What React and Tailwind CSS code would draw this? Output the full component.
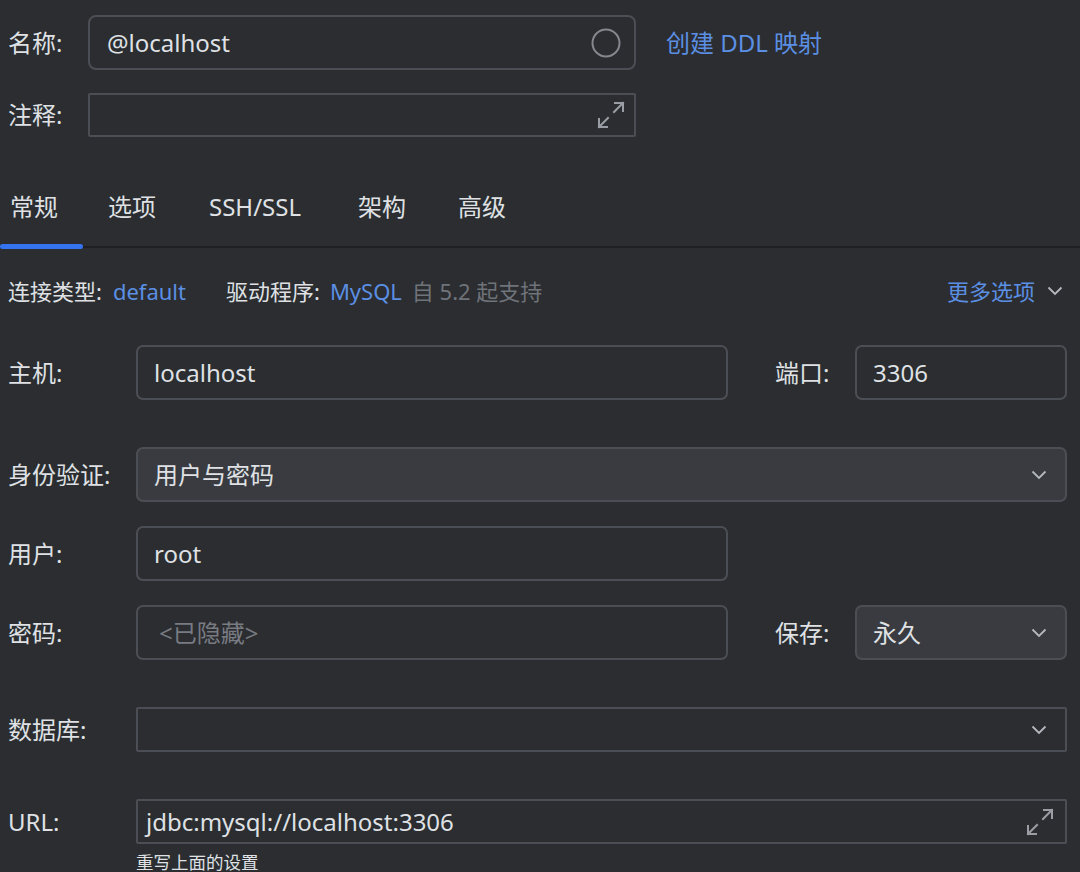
import { useState } from 'react'

const font = { fontFamily: '"Noto Sans", "Noto Sans CJK SC", sans-serif' }

function Chevron({ className = '' }) {
  return (
    <svg width="16" height="10" viewBox="0 0 16 10" className={className}>
      <polyline points="1.5,1.5 8,8 14.5,1.5" fill="none" stroke="#b4b8bf" strokeWidth="1.8" />
    </svg>
  )
}

function Expand() {
  return (
    <svg width="30" height="30" viewBox="0 0 30 30">
      <g fill="none" stroke="#9a9da3" strokeWidth="2" strokeLinecap="square">
        <line x1="3" y1="27" x2="12" y2="18" />
        <polyline points="3,19 3,27 11,27" />
        <line x1="18" y1="12" x2="27" y2="3" />
        <polyline points="19,3 27,3 27,11" />
      </g>
    </svg>
  )
}

function Label({ children, w = 'w-[128px]' }) {
  return <div className={`${w} shrink-0 text-[24px] text-[#dfe1e5]`}>{children}</div>
}

function TextBox({ value, placeholder, width = 'w-[592px]' }) {
  return (
    <div className={`${width} h-[55px] rounded-[7px] border-2 border-[#4b4e54] flex items-center px-[16px] text-[24px]`}>
      {value ? (
        <span className="text-[#dfe1e5]">{value}</span>
      ) : (
        <span className="text-[#787b82] pl-[5px]">{placeholder}</span>
      )}
    </div>
  )
}

function Select({ value, width }) {
  return (
    <div className={`${width} h-[55px] rounded-[7px] border-2 border-[#4b4e54] bg-[#393b40] flex items-center justify-between pl-[16px] pr-[18px] text-[24px] text-[#dfe1e5]`}>
      <span>{value}</span>
      <Chevron />
    </div>
  )
}

export default function App() {
  const [tab, setTab] = useState(0)
  const tabs = [
    { name: '常规', cls: 'w-[83px] pl-[10px]' },
    { name: '选项', cls: 'w-[100px] pl-[25px]' },
    { name: 'SSH/SSL', cls: 'w-[150px] pl-[26px]' },
    { name: '架构', cls: 'w-[100px] pl-[25px]' },
    { name: '高级', cls: 'w-[100px] pl-[25px]' },
  ]

  return (
    <div className="w-[1080px] h-[872px] overflow-hidden bg-[#2b2d30] text-[#dfe1e5]" style={font}>
      {/* name */}
      <div className="flex items-center pl-[8px] pt-[15px]">
        <div className="w-[80px] text-[24px]">名称:</div>
        <div className="w-[548px] h-[55px] rounded-[8px] border-2 border-[#4b4e54] flex items-center justify-between pl-[17px] pr-[12px]">
          <span className="text-[24px]">@localhost</span>
          <svg width="32" height="32" viewBox="0 0 32 32">
            <circle cx="16" cy="16" r="13.5" fill="none" stroke="#84878d" strokeWidth="2" />
          </svg>
        </div>
        <a className="ml-[30px] text-[24px] text-[#5b8fe3]">创建 DDL 映射</a>
      </div>

      {/* comment */}
      <div className="flex items-center pl-[8px] mt-[23px]">
        <div className="w-[80px] text-[24px]">注释:</div>
        <div className="w-[548px] h-[44px] rounded-[2px] border-2 border-[#4b4e54] flex items-center justify-end pr-[8px]">
          <Expand />
        </div>
      </div>

      {/* tabs */}
      <div className="mt-[31px] flex h-[80px] border-b-2 border-[#1e1f22]">
        {tabs.map((t, i) => (
          <button
            key={t.name}
            onClick={() => setTab(i)}
            className={`${t.cls} relative text-left text-[24px] text-[#dfe1e5] flex items-center`}
          >
            {t.name}
            {tab === i && <div className="absolute left-0 right-0 bottom-[-3px] h-[5px] rounded-full bg-[#3574f0]" />}
          </button>
        ))}
      </div>

      {/* info row */}
      <div className="flex items-center h-[44px] mt-[21px] pl-[8px] pr-[17px] text-[22px]">
        <span>连接类型:</span>
        <span className="ml-[11px] text-[#5b8fe3]">default</span>
        <span className="ml-[40px]">驱动程序:</span>
        <span className="ml-[10px] text-[#5b8fe3]">MySQL</span>
        <span className="ml-[10px] text-[#6f737a]">自 5.2 起支持</span>
        <span className="ml-auto text-[#5b8fe3]">更多选项</span>
        <Chevron className="ml-[12px]" />
      </div>

      {/* host */}
      <div className="flex items-center pl-[8px] mt-[32px]">
        <Label>主机:</Label>
        <TextBox value="localhost" />
        <div className="w-[127px] pl-[47px] text-[24px]">端口:</div>
        <TextBox value="3306" width="w-[212px]" />
      </div>

      {/* auth */}
      <div className="flex items-center pl-[8px] mt-[47px]">
        <Label>身份验证:</Label>
        <Select value="用户与密码" width="w-[931px]" />
      </div>

      {/* user */}
      <div className="flex items-center pl-[8px] mt-[24px]">
        <Label>用户:</Label>
        <TextBox value="root" />
      </div>

      {/* password */}
      <div className="flex items-center pl-[8px] mt-[24px]">
        <Label>密码:</Label>
        <TextBox placeholder="<已隐藏>" />
        <div className="w-[127px] pl-[47px] text-[24px]">保存:</div>
        <Select value="永久" width="w-[212px]" />
      </div>

      {/* database */}
      <div className="flex items-center pl-[8px] mt-[47px]">
        <Label>数据库:</Label>
        <div className="w-[931px] h-[45px] rounded-[2px] border-2 border-[#4b4e54] flex items-center justify-end pr-[18px]">
          <Chevron />
        </div>
      </div>

      {/* url */}
      <div className="flex items-center pl-[8px] mt-[47px]">
        <Label>URL:</Label>
        <div className="w-[931px] h-[45px] rounded-[2px] border-2 border-[#4b4e54] flex items-center justify-between pl-[8px] pr-[10px]">
          <span className="text-[24px]">jdbc:mysql://localhost:3306</span>
          <Expand />
        </div>
      </div>
      <div className="pl-[136px] mt-[6px] text-[17.5px] leading-[24px] text-[#dfe1e5]">重写上面的设置</div>
    </div>
  )
}
